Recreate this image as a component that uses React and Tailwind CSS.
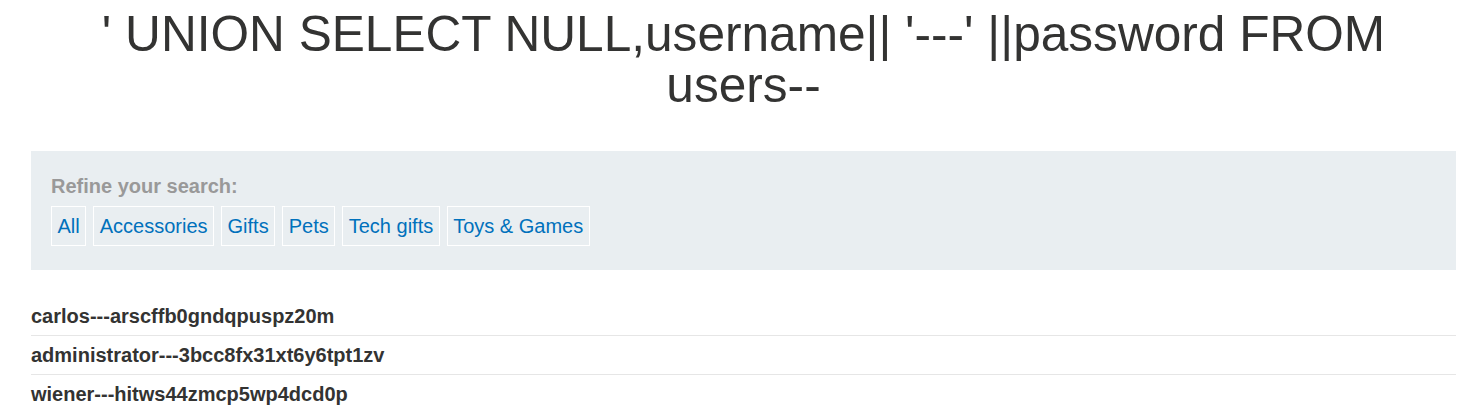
const categories = ["All", "Accessories", "Gifts", "Pets", "Tech gifts", "Toys & Games"];

const results = [
  "carlos---arscffb0gndqpuspz20m",
  "administrator---3bcc8fx31xt6y6tpt1zv",
  "wiener---hitws44zmcp5wp4dcd0p",
];

const App = () => {
  return (
    <div className="min-h-screen bg-white pl-[31px] pr-[27px] font-['Liberation_Sans',Arial,sans-serif] text-[#333332]">
      {/* Title */}
      <h1 className="mt-[9px] text-center text-[49.6px] leading-[51px]">
        ' UNION SELECT NULL,username|| '---' ||password FROM users--
      </h1>

      {/* Filters */}
      <section className="mt-[40px] bg-[#e9eef1] px-[20px] py-[24px]">
        <div className="text-[20px] font-bold leading-[23px] text-[#999999]">Refine your search:</div>
        <div className="mt-[8px] flex gap-[7px]">
          {categories.map((c) => (
            <a
              key={c}
              href="#"
              className="border border-white px-[5.5px] py-[7px] text-[20px] leading-[24px] text-[#0071bc]"
            >
              {c}
            </a>
          ))}
        </div>
      </section>

      {/* Results */}
      <table className="mt-[27px] w-full border-collapse">
        <tbody>
          {results.map((r) => (
            <tr key={r} className="border-b border-[#e6e6e6]">
              <th className="py-[8px] text-left text-[20px] font-bold leading-[22px]">{r}</th>
            </tr>
          ))}
        </tbody>
      </table>
    </div>
  );
};

export default App;
